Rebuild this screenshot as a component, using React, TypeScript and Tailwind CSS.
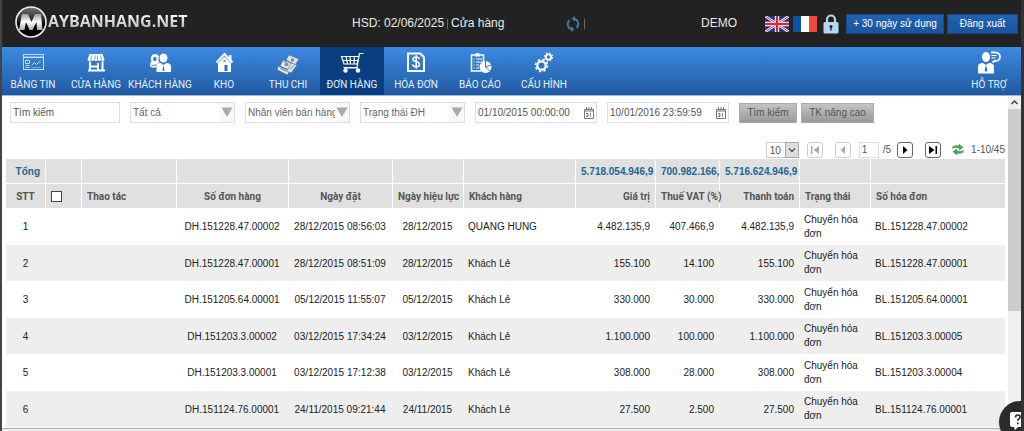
import type { ReactNode } from "react";
import clsx from "clsx";

interface Order {
  code: string;
  orderedAt: string;
  validFrom: string;
  customer: string;
  value: string;
  vat: string;
  total: string;
  invoice: string;
}

const orders: Order[] = [
  { code: "DH.151228.47.00002", orderedAt: "28/12/2015 08:56:03", validFrom: "28/12/2015", customer: "QUANG HUNG", value: "4.482.135,9", vat: "407.466,9", total: "4.482.135,9", invoice: "BL.151228.47.00002" },
  { code: "DH.151228.47.00001", orderedAt: "28/12/2015 08:51:09", validFrom: "28/12/2015", customer: "Khách Lẻ", value: "155.100", vat: "14.100", total: "155.100", invoice: "BL.151228.47.00001" },
  { code: "DH.151205.64.00001", orderedAt: "05/12/2015 11:55:07", validFrom: "05/12/2015", customer: "Khách Lẻ", value: "330.000", vat: "30.000", total: "330.000", invoice: "BL.151205.64.00001" },
  { code: "DH.151203.3.00002", orderedAt: "03/12/2015 17:34:24", validFrom: "03/12/2015", customer: "Khách Lẻ", value: "1.100.000", vat: "100.000", total: "1.100.000", invoice: "BL.151203.3.00005" },
  { code: "DH.151203.3.00001", orderedAt: "03/12/2015 17:12:38", validFrom: "03/12/2015", customer: "Khách Lẻ", value: "308.000", vat: "28.000", total: "308.000", invoice: "BL.151203.3.00004" },
  { code: "DH.151124.76.00001", orderedAt: "24/11/2015 09:21:44", validFrom: "24/11/2015", customer: "Khách Lẻ", value: "27.500", vat: "2.500", total: "27.500", invoice: "BL.151124.76.00001" },
];

const Icon = ({ children }: { children: ReactNode }) => (
  <svg viewBox="0 0 24 24" className="h-6 w-6" fill="none" stroke="white" strokeWidth="1.5" aria-hidden="true">
    {children}
  </svg>
);

const DashboardIcon = () => (
  <Icon>
    <g stroke="#c3dcf8" strokeWidth="1">
      <rect x="2.5" y="3.5" width="20" height="15" />
      <path d="M2.5 6.300h20" strokeWidth="1.5" />
      <path d="M4.500 9.500h4v3h-4zM4.500 14.500h4M4.500 16.500h4M10.500 14.500l3-3 2 2 4-3.500" />
      <path d="M10.500 16.500h9" strokeOpacity="0.5" />
    </g>
  </Icon>
);

const StoreIcon = () => (
  <Icon>
    <path d="M5.500 3h13l2 5.500a1.600 1.600 0 0 1-3.200 0 1.800 1.800 0 0 1-3.500 0 1.800 1.800 0 0 1-3.600 0 1.800 1.800 0 0 1-3.500 0 1.600 1.600 0 0 1-3.200 0z" fill="white" stroke="none" />
    <path d="M8 4.500 7 8.500M11 4.500v4M13.500 4.500v4M16.500 4.500l1 4" stroke="#3b7fd0" strokeWidth="0.7" />
    <path d="M6 10.500V19M18.500 10.500V19M4 19.500h17M6 15.500h8M14 12v7" strokeWidth="2" />
  </Icon>
);

const CustomersIcon = () => (
  <Icon>
    <g fill="white" stroke="none">
      <ellipse cx="15.500" cy="7" rx="4" ry="4.500" />
      <path d="M8.500 21V15.500q0-3.500 4-3.500l3 2 3-2q4.500 0 4.500 3.500V21z" />
      <path d="M3 10.500q-1-7.500 4-7.500 2.500 0 4 2-1.500 4 .5 6.500-3.500 1-3.500 5H4q-2 0-2-2.500 0-3.500 3-3.500z" />
    </g>
    <ellipse cx="6.800" cy="8" rx="1.600" ry="2.200" fill="#3478cb" stroke="none" />
    <path d="M3.500 14.500h2M7 13v2" stroke="#3478cb" strokeWidth="1" />
    <path d="m15.500 14 1 5-1 1.500-1-1.500z" fill="#2d6dbd" stroke="none" />
  </Icon>
);

const WarehouseIcon = () => (
  <Icon>
    <path d="M17 4h2.500v6H17z" fill="white" stroke="none" />
    <path d="m4.500 11.500 8-8.500 8 8.500" strokeWidth="2" />
    <path d="m12.500 5.500 6.500 6.500v9H6v-9z" fill="white" stroke="none" />
    <path d="M12.500 14h3v6h-3z" fill="#2d6dbd" stroke="none" />
    <path d="M11.500 10h2" stroke="#2d6dbd" />
  </Icon>
);

const CashIcon = () => (
  <Icon>
    <g fill="#e3e4e6" stroke="#55708f" strokeWidth="0.6">
      <path d="m13 4 10 4-4 6-9-5z" />
      <path d="m7 9 10 4-4 6-9-4z" />
      <path d="m1.500 15 12 5-2 4-10-5z" />
      <path d="m15 12 6 2-6 8-4-2z" />
    </g>
    <circle cx="16.500" cy="9" r="1.800" fill="#738ca8" stroke="none" />
    <circle cx="10.500" cy="13.500" r="1.800" fill="#738ca8" stroke="none" />
    <path d="m4.500 17.500 6 3M14 18.500l4-4.500M8 10.500l2 1" stroke="#55708f" strokeWidth="0.8" />
  </Icon>
);

const CartIcon = () => (
  <Icon>
    <path d="M23.500 2.500h-4L17 16.500H3.500M1.500 5.500h17.500L17 13H4zM2.500 9.500h15.500M6 5.500 7.500 13M10 5.500l.5 7.500M14.500 5.500 14 13" strokeWidth="1.200" />
    <circle cx="5.500" cy="19.500" r="2.200" fill="white" stroke="none" />
    <circle cx="18" cy="19.500" r="2.200" fill="white" stroke="none" />
    <path d="M4 17h14" strokeWidth="1" />
  </Icon>
);

const InvoiceIcon = () => (
  <Icon>
    <path d="M4 2.500h12.500l3.500 4v13.500H4z" strokeWidth="2" />
    <path d="M15.500 8q-.5-2-3.500-2T9 8.300q0 2 3.200 2.500 3.300.5 3.300 2.700t-3.300 2.200q-3.200 0-3.700-2.200M12.200 4.200v13.500" strokeWidth="1.500" />
  </Icon>
);

const ReportIcon = () => (
  <Icon>
    <path d="M13 20H3.500V4h12v8" />
    <path d="M7 4q0-2 2.500-2T12 4v1.500H7z" fill="white" stroke="none" />
    <path d="M5.500 8h1M5.500 11h1M5.500 14h1M5.500 17h1M8 8h6M8 11h6M8 14h3M8 17h3" strokeWidth="1" />
    <circle cx="17.500" cy="16" r="6" fill="white" stroke="none" />
    <path d="M17.500 10v6l5.500-2M17.500 16l4 4" stroke="#3074c8" strokeWidth="1" />
  </Icon>
);

const GearsIcon = () => (
  <Icon>
    <circle cx="9.500" cy="14.500" r="4.200" strokeWidth="2.200" />
    <circle cx="9.500" cy="14.500" r="6" strokeWidth="1.600" strokeDasharray="2.360 2.360" />
    <circle cx="16.500" cy="6" r="2.700" strokeWidth="1.800" />
    <circle cx="16.500" cy="6" r="4" strokeWidth="1.200" strokeDasharray="1.570 1.570" />
  </Icon>
);

const SupportIcon = () => (
  <Icon>
    <ellipse cx="9" cy="6" rx="4" ry="5" fill="white" stroke="none" />
    <path d="M1 22.500v-7Q1 12 6 12l3 2 3-2q5 0 5 3.500v7z" fill="white" stroke="none" />
    <path d="m9 14 1.300 5L9 21.500 7.700 19z" fill="#2d6dbd" stroke="none" />
    <path d="M14 1.500q9-1 9 4t-5.500 4.500l-2 1.500" strokeWidth="1.800" />
    <path d="M14.500 4.500h5M14.500 7h4" strokeWidth="1" />
  </Icon>
);

const menu = [
  { label: "BẢNG TIN", icon: DashboardIcon },
  { label: "CỬA HÀNG", icon: StoreIcon },
  { label: "KHÁCH HÀNG", icon: CustomersIcon },
  { label: "KHO", icon: WarehouseIcon },
  { label: "THU CHI", icon: CashIcon },
  { label: "ĐƠN HÀNG", icon: CartIcon, active: true },
  { label: "HÓA ĐƠN", icon: InvoiceIcon },
  { label: "BÁO CÁO", icon: ReportIcon },
  { label: "CẤU HÌNH", icon: GearsIcon },
];

const Logo = () => (
  <a href="#" className="flex items-center" aria-label="MAYBANHANG.NET">
    <svg viewBox="0 0 34 34" className="h-[34px] w-[34px]" aria-hidden="true">
      <defs>
        <linearGradient id="disc" x2="0" y2="1">
          <stop offset="0" stopColor="#777" />
          <stop offset="0.45" stopColor="#222" />
          <stop offset="0.6" stopColor="#000" />
        </linearGradient>
        <linearGradient id="silver" x2="0" y2="1">
          <stop offset="0" stopColor="#999" />
          <stop offset="0.5" stopColor="#fff" />
          <stop offset="1" stopColor="#aaa" />
        </linearGradient>
      </defs>
      <circle cx="17" cy="17" r="15" fill="url(#disc)" stroke="#eee" strokeWidth="1.600" />
      <path d="M8 9h6l3.500 8L21 9h6l1.500 16H23l-.500-8-4 8h-3l-3.500-8-1.500 8H5z" fill="url(#silver)" />
    </svg>
    <span className="bg-linear-to-b from-white to-[#b5b5b5] bg-clip-text font-['Open_Sans',sans-serif] text-[16px] font-bold text-transparent">
      AYBANHANG.NET
    </span>
  </a>
);

const SyncIcon = () => (
  <svg viewBox="0 0 14 16" className="h-4 w-3.5" fill="none" stroke="#3f7cab" strokeWidth="1.800" aria-hidden="true">
    <path d="M5.500 13.200A5.200 5.200 0 0 1 3.500 4.200M8.500 2.800a5.200 5.200 0 0 1 2 9" />
    <path d="M9 0v5.500L5.500 2.800zM5 16v-5.500l3.500 2.700z" fill="#3f7cab" stroke="none" />
  </svg>
);

const BritishFlag = () => (
  <svg viewBox="0 0 24 16" className="h-4 w-6" aria-hidden="true">
    <rect width="24" height="16" fill="#123a8c" />
    <path d="m0 0 24 16M24 0 0 16" stroke="white" strokeWidth="2.600" />
    <path d="m0 0 24 16M24 0 0 16" stroke="#d8283c" strokeWidth="1" />
    <path d="M12 0v16M0 8h24" stroke="white" strokeWidth="4.400" />
    <path d="M12 0v16M0 8h24" stroke="#d8283c" strokeWidth="2.400" />
  </svg>
);

const FrenchFlag = () => (
  <svg viewBox="0 0 24 16" className="h-4 w-6" aria-hidden="true">
    <rect width="24" height="16" fill="white" />
    <rect width="8" height="16" fill="#0d52a5" />
    <rect x="16" width="8" height="16" fill="#f04a3c" />
  </svg>
);

const LockIcon = () => (
  <svg viewBox="0 0 16 20" className="h-5 w-4" aria-hidden="true">
    <path d="M4 9V5.500a4 4 0 0 1 8 0V9" fill="none" stroke="#b5d5f3" strokeWidth="2.200" />
    <rect x="0.500" y="8" width="15" height="11.500" rx="1.500" fill="#b5d5f3" />
    <circle cx="8" cy="12.500" r="1.500" fill="#222" />
    <path d="M7.300 13h1.400v3.500H7.300z" fill="#222" />
  </svg>
);

const CalendarIcon = () => (
  <svg viewBox="0 0 10 12" className="h-3 w-2.5 shrink-0" fill="none" stroke="#777" aria-hidden="true">
    <path d="M.5 2.500h9v9h-9zM1 4h8M2.500 0v3M5 0v3M7.500 0v3" />
    <path d="M2 6.500h2v3H2M2.500 8H4M6.500 6v4" strokeWidth="0.900" />
  </svg>
);

const topButton =
  "h-5 border border-[#174a86] bg-linear-to-b from-[#1f62b4] to-[#1b549c] text-[10px] text-white";

const SelectBox = ({ label }: { label: string }) => (
  <div className="relative w-[105px] shrink-0">
    <select
      aria-label={label}
      className="h-[21px] w-full appearance-none border border-[#ddd] bg-white pl-0.5 text-[#666] outline-none"
    >
      <option>{label}</option>
    </select>
    <svg viewBox="0 0 14 19" className="pointer-events-none absolute top-px right-px h-[19px] w-3.5" aria-hidden="true">
      <rect width="14" height="19" fill="#f8f8f8" />
      <path d="M1.500 4.500h11L7 14z" fill="#aaa" />
    </svg>
  </div>
);

const DateBox = ({ label, value }: { label: string; value: string }) => (
  <div className="flex h-[21px] w-[122px] shrink-0 items-center border border-[#ddd] bg-white pr-0.5">
    <input aria-label={label} defaultValue={value} className="w-full min-w-0 pl-0.5 text-[#555] outline-none" />
    <CalendarIcon />
  </div>
);

const PageButton = ({ label, disabled, d }: { label: string; disabled?: boolean; d: string }) => (
  <button
    aria-label={label}
    disabled={disabled}
    className={clsx(
      "h-4 w-4 shrink-0 rounded-[3px] border bg-white",
      disabled ? "border-[#ccc] text-[#aaa]" : "border-[#666] text-black",
    )}
  >
    <svg viewBox="0 0 14 14" className="h-3.5 w-3.5" fill="currentColor" aria-hidden="true">
      <path d={d} />
    </svg>
  </button>
);

const Header = () => (
  <header className="flex h-[47px] shrink-0 items-center bg-[#222] pr-[3px] pl-3 text-[12px] text-[#e8e8e8]">
    <div className="w-[338px] shrink-0 pb-1">
      <Logo />
    </div>
    <span>HSD: 02/06/2025</span>
    <span className="mx-[3px] h-2.5 border-l border-[#666]" />
    <span className="w-[115px]">Cửa hàng</span>
    <button aria-label="Đồng bộ">
      <SyncIcon />
    </button>
    <span className="ml-1 h-2.5 border-l border-[#666]" />
    <div className="ml-auto flex items-center">
      <span className="mr-7">DEMO</span>
      <div className="mr-[7px] flex items-center gap-1">
        <button aria-label="English">
          <BritishFlag />
        </button>
        <button aria-label="Français">
          <FrenchFlag />
        </button>
        <button aria-label="Đổi mật khẩu" className="ml-0.5">
          <LockIcon />
        </button>
      </div>
      <div className="flex gap-[3px]">
        <button className={clsx(topButton, "w-[98px]")}>+ 30 ngày sử dụng</button>
        <button className={clsx(topButton, "w-[71px]")}>Đăng xuất</button>
      </div>
    </div>
  </header>
);

const menuItem = "flex w-16 shrink-0 flex-col items-center gap-0.5 pt-1 whitespace-nowrap text-[#e6effa]";

const Menu = () => (
  <nav className="flex h-[49px] shrink-0 border-b border-[#9db8dc] bg-linear-to-b from-[#3d8ae3] to-[#1f5a9f] font-[Roboto,sans-serif] text-[10px] leading-[16px]">
    {menu.map(({ label, icon: MenuIcon, active }) => (
      <a key={label} href="#" className={clsx(menuItem, "first:w-[62px]", active && "bg-[#093f80]")}>
        <MenuIcon />
        {label}
      </a>
    ))}
    <a href="#" className={clsx(menuItem, "ml-auto")}>
      <SupportIcon />
      HỖ TRỢ
    </a>
  </nav>
);

const searchButton =
  "h-5 border border-[#aaa] bg-linear-to-b from-[#c4c4c4] to-[#999] text-[#555]";

const Filters = () => (
  <form className="flex items-center gap-2.5 pt-1.5 pl-1">
    <input
      aria-label="Tìm kiếm"
      placeholder="Tìm kiếm"
      className="h-[21px] w-[110px] shrink-0 border border-[#ddd] pl-0.5 outline-none placeholder:text-[#555]"
    />
    <SelectBox label="Tất cả" />
    <SelectBox label="Nhân viên bán hàng" />
    <SelectBox label="Trạng thái ĐH" />
    <DateBox label="Từ ngày" value="01/10/2015 00:00:00" />
    <DateBox label="Đến ngày" value="10/01/2016 23:59:59" />
    <div className="flex gap-1">
      <button type="button" className={clsx(searchButton, "w-[58px]")}>Tìm kiếm</button>
      <button type="button" className={clsx(searchButton, "w-[73px]")}>TK nâng cao</button>
    </div>
  </form>
);

const Pager = () => (
  <div className="mt-[17px] flex h-[19px] items-center justify-end text-[#555]">
    <div className="relative mr-2 w-[33px]">
      <select aria-label="Số dòng" className="h-4 w-full appearance-none border border-[#ccc] pl-[3px] outline-none">
        <option>10</option>
      </select>
      <svg viewBox="0 0 14 16" className="pointer-events-none absolute top-0 right-0 h-4 w-3.5" aria-hidden="true">
        <rect x="0.500" y="0.500" width="13" height="15" fill="#ddd" stroke="#aaa" />
        <path d="m4 6.500 3 3 3-3" fill="none" stroke="#444" strokeWidth="1.200" />
      </svg>
    </div>
    <div className="mr-2 flex gap-3">
      <PageButton label="Trang đầu" disabled d="M3 3h1.500v8H3zM11 3v8L5.500 7z" />
      <PageButton label="Trang trước" disabled d="M9 3v8L4.500 7z" />
    </div>
    <input aria-label="Trang" defaultValue="1" className="mr-1 h-4 w-5 border border-[#ddd] pl-0.5 outline-none" />
    <span className="mr-1.5">/5</span>
    <div className="mr-2.5 flex gap-3">
      <PageButton label="Trang sau" d="M5 3v8l4.500-4z" />
      <PageButton label="Trang cuối" d="M3 3v8l5.500-4zM9.500 3H11v8H9.500z" />
    </div>
    <button aria-label="Tải lại" className="mr-1.5">
      <svg viewBox="0 0 14 13" className="h-[13px] w-3.5" fill="#4ba253" aria-hidden="true">
        <path d="M1 6Q1 1.500 8 2.500V.500l4.500 4L8 7.500V5.500Q4 4 1 6z" />
        <path d="M13 7q0 4.500-7 3.500v2l-4.500-4L6 5.500v2q4 1.500 7-.5z" />
      </svg>
    </button>
    <span>1-10/45</span>
  </div>
);

const th = "border-l border-white bg-[#e0e0e0] px-[5px] font-bold whitespace-nowrap first:border-l-0";

const OrderTable = () => (
  <table className="w-full table-fixed border-separate border-spacing-0">
    <colgroup>
      <col className="w-[39px]" />
      <col className="w-9" />
      <col className="w-[95px]" />
      <col className="w-28" />
      <col className="w-[104px]" />
      <col className="w-[71px]" />
      <col className="w-28" />
      <col className="w-20" />
      <col className="w-16" />
      <col className="w-20" />
      <col className="w-[71px]" />
      <col />
    </colgroup>
    <thead>
      <tr className="h-[25px] text-[#1d6890]">
        <th className={clsx(th, "border-b text-right")}>Tổng</th>
        <th className={clsx(th, "border-b")} />
        <th className={clsx(th, "border-b")} />
        <th className={clsx(th, "border-b")} />
        <th className={clsx(th, "border-b")} />
        <th className={clsx(th, "border-b")} />
        <th className={clsx(th, "border-b")} />
        <th className={clsx(th, "border-b text-right")}>5.718.054.946,9</th>
        <th className={clsx(th, "border-b text-left")}>700.982.166,</th>
        <th className={clsx(th, "border-b text-right")}>5.716.624.946,9</th>
        <th className={clsx(th, "border-b")} />
        <th className={clsx(th, "border-b")} />
      </tr>
      <tr className="h-6 font-[Roboto,sans-serif] text-[#555]">
        <th className={th}>STT</th>
        <th className={clsx(th, "text-left")}>
          <input
            type="checkbox"
            aria-label="Chọn tất cả"
            className="block h-[11px] w-[11px] appearance-none border border-[#444] bg-white"
          />
        </th>
        <th className={clsx(th, "text-left")}>Thao tác</th>
        <th className={th}>Số đơn hàng</th>
        <th className={th}>Ngày đặt</th>
        <th className={th}>Ngày hiệu lực</th>
        <th className={clsx(th, "text-left")}>Khách hàng</th>
        <th className={clsx(th, "text-right")}>Giá trị</th>
        <th className={clsx(th, "text-left")}>Thuế VAT (%)</th>
        <th className={clsx(th, "text-right")}>Thanh toán</th>
        <th className={clsx(th, "text-left")}>Trạng thái</th>
        <th className={clsx(th, "text-left")}>Số hóa đơn</th>
      </tr>
    </thead>
    <tbody className="text-[#222]">
      {orders.map((order, index) => (
        <tr key={order.code} className="odd:h-[37px] even:h-9 even:bg-[#eee]">
          <td className="text-center">{index + 1}</td>
          <td />
          <td />
          <td className="text-center">{order.code}</td>
          <td className="text-center">{order.orderedAt}</td>
          <td className="text-center">{order.validFrom}</td>
          <td className="px-[5px]">{order.customer}</td>
          <td className="px-[5px] text-right">{order.value}</td>
          <td className="px-[5px] text-right">{order.vat}</td>
          <td className="px-[5px] text-right">{order.total}</td>
          <td className="px-[5px] leading-[14px]">Chuyển hóa đơn</td>
          <td className="px-[5px]">{order.invoice}</td>
        </tr>
      ))}
    </tbody>
  </table>
);

const Scrollbar = () => (
  <div className="flex w-[13px] shrink-0 flex-col bg-[#f0f0f0]" aria-hidden="true">
    <svg viewBox="0 0 13 13" className="h-[13px] w-[13px]" fill="none" stroke="#444" strokeWidth="1.500">
      <path d="m3.500 8 3-3 3 3" />
    </svg>
    <div className="h-[202px] bg-[#cdcdcd]" />
  </div>
);

export default function App() {
  return (
    <div className="relative flex h-screen flex-col overflow-hidden border-r-[3px] border-l-2 border-r-[#333] border-l-[#444] bg-white font-['Liberation_Sans',Arial,sans-serif] text-[10px] leading-[15px]">
      <Header />
      <Menu />
      <main className="flex min-h-0 flex-1">
        <div className="min-w-0 flex-1 overflow-hidden pr-[3px] pl-1">
          <Filters />
          <Pager />
          <OrderTable />
        </div>
        <Scrollbar />
      </main>
      <footer className="h-[3px] shrink-0 border-t border-[#aaa] bg-[#eee]" />
      <button
        aria-label="Trợ giúp"
        className="absolute -right-5 -bottom-3 h-[42px] w-[42px] rounded-full bg-[#2b2b2b] shadow-md"
      >
        <svg viewBox="0 0 42 42" aria-hidden="true">
          <path d="M13 11h14a2 2 0 0 1 2 2v11a2 2 0 0 1-2 2h-8l-3 3-1-3h-2a2 2 0 0 1-2-2V13a2 2 0 0 1 2-2z" fill="white" />
          <path d="M16.500 16.500q0-2.500 2.300-2.500t2.200 2q0 1.200-1.200 1.900-1 .6-1 1.900M18.800 21.500v1.800" fill="none" stroke="#2b2b2b" strokeWidth="1.700" />
        </svg>
      </button>
    </div>
  );
}
